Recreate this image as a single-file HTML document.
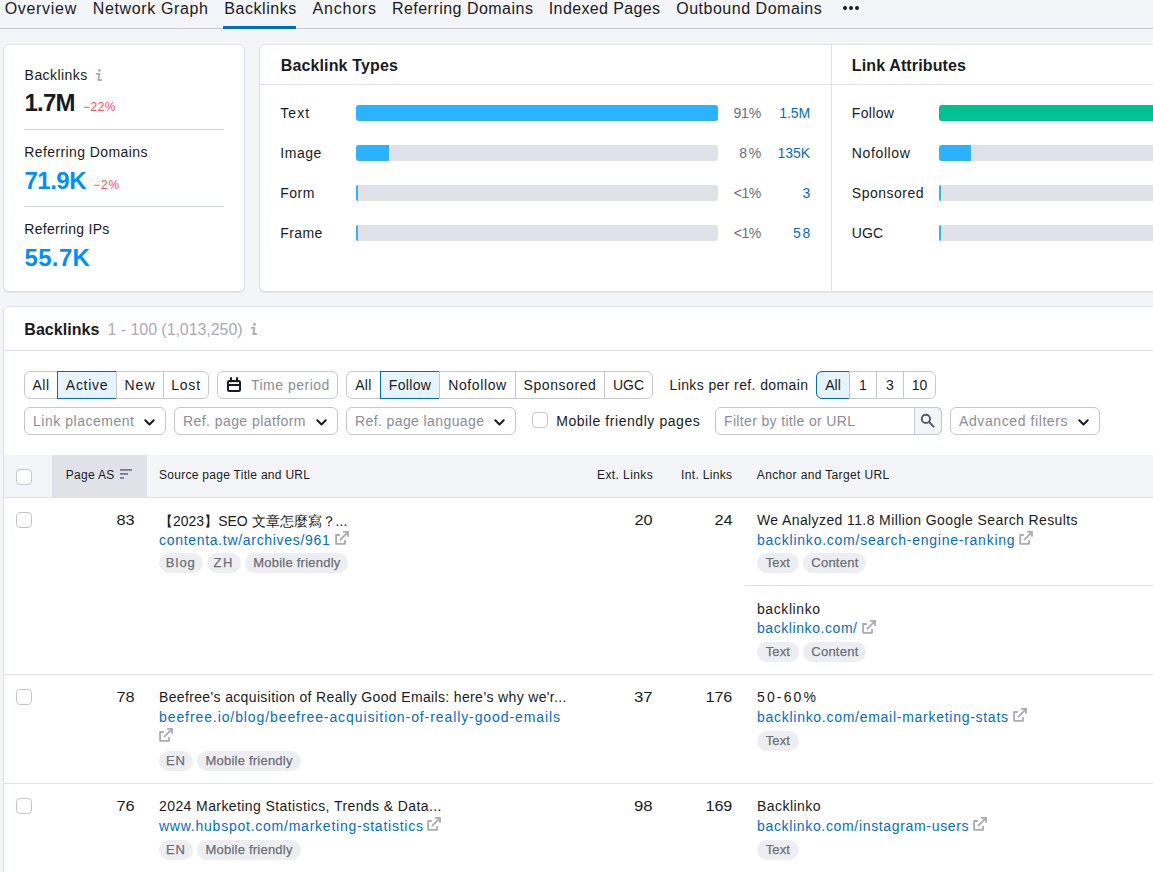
<!DOCTYPE html>
<html><head><meta charset="utf-8"><title>Backlinks</title>
<style>
html,body{margin:0;padding:0;}
body{width:1153px;height:872px;overflow:hidden;position:relative;background:#f4f5f9;font-family:"Liberation Sans",sans-serif;color:#191b23;}
.t{position:absolute;white-space:nowrap;}
</style></head><body>
<div style="position:absolute;left:0px;top:28px;width:1153px;height:1px;background:#c4c7d0"></div>
<div style="position:absolute;left:223px;top:26px;width:73px;height:3px;background:#006dca"></div>
<span class="t" style="top:1.46px;font-size:16px;line-height:16px;color:#191b23;letter-spacing:0.688px;left:4.70px;">Overview</span>
<span class="t" style="top:1.46px;font-size:16px;line-height:16px;color:#191b23;letter-spacing:0.634px;left:92.80px;">Network Graph</span>
<span class="t" style="top:1.46px;font-size:16px;line-height:16px;color:#191b23;letter-spacing:0.565px;left:224.20px;">Backlinks</span>
<span class="t" style="top:1.46px;font-size:16px;line-height:16px;color:#191b23;letter-spacing:0.799px;left:312.50px;">Anchors</span>
<span class="t" style="top:1.46px;font-size:16px;line-height:16px;color:#191b23;letter-spacing:0.476px;left:391.90px;">Referring Domains</span>
<span class="t" style="top:1.46px;font-size:16px;line-height:16px;color:#191b23;letter-spacing:0.371px;left:548.80px;">Indexed Pages</span>
<span class="t" style="top:1.46px;font-size:16px;line-height:16px;color:#191b23;letter-spacing:0.516px;left:676.20px;">Outbound Domains</span>
<div style="position:absolute;left:842.5px;top:6px;width:4px;height:4px;border-radius:50%;background:#191b23"></div>
<div style="position:absolute;left:848.8px;top:6px;width:4px;height:4px;border-radius:50%;background:#191b23"></div>
<div style="position:absolute;left:855.1px;top:6px;width:4px;height:4px;border-radius:50%;background:#191b23"></div>
<div style="position:absolute;left:3px;top:44px;width:242px;height:248px;background:#fff;border:1px solid #e0e1e9;border-radius:6px;box-sizing:border-box;box-shadow:0 1px 1px rgba(25,27,35,0.08)"></div>
<span class="t" style="top:68.15px;font-size:14px;line-height:14px;color:#191b23;letter-spacing:0.445px;left:24.60px;">Backlinks</span>
<svg style="position:absolute;left:95px;top:69px" width="8" height="12" viewBox="0 0 8 12"><circle cx="4.5" cy="1.4" r="1.35" fill="#a9abb6"/><path d="M1.1 4.9 L4.5 4.9 L3.3 11 L6.9 11" stroke="#a9abb6" stroke-width="1.8" fill="none" stroke-linejoin="round"/></svg>
<span class="t" style="top:90.68px;font-size:24px;line-height:24px;color:#191b23;font-weight:700;letter-spacing:-0.853px;left:24.60px;">1.7M</span>
<span class="t" style="top:100.84px;font-size:12px;line-height:12px;color:#ff4953;letter-spacing:0.490px;left:83.00px;">−22%</span>
<div style="position:absolute;left:24px;top:129px;width:200px;height:1px;background:#d1d3dc"></div>
<span class="t" style="top:145.45px;font-size:14px;line-height:14px;color:#191b23;letter-spacing:0.405px;left:24.20px;">Referring Domains</span>
<span class="t" style="top:168.68px;font-size:24px;line-height:24px;color:#008ff8;font-weight:700;letter-spacing:-0.512px;left:24.50px;">71.9K</span>
<span class="t" style="top:178.84px;font-size:12px;line-height:12px;color:#ff4953;letter-spacing:0.820px;left:93.20px;">−2%</span>
<div style="position:absolute;left:24px;top:206px;width:200px;height:1px;background:#d1d3dc"></div>
<span class="t" style="top:222.15px;font-size:14px;line-height:14px;color:#191b23;letter-spacing:0.275px;left:24.30px;">Referring IPs</span>
<span class="t" style="top:245.68px;font-size:24px;line-height:24px;color:#008ff8;font-weight:700;letter-spacing:0.338px;left:24.50px;">55.7K</span>
<div style="position:absolute;left:259px;top:44px;width:1100px;height:248px;background:#fff;border:1px solid #e0e1e9;border-radius:6px;box-sizing:border-box;box-shadow:0 1px 1px rgba(25,27,35,0.08)"></div>
<div style="position:absolute;left:260px;top:84px;width:1100px;height:1px;background:#e0e1e9"></div>
<div style="position:absolute;left:831px;top:45px;width:1px;height:246px;background:#e0e1e9"></div>
<span class="t" style="top:57.66px;font-size:16px;line-height:16px;color:#191b23;font-weight:700;letter-spacing:0.145px;left:280.70px;">Backlink Types</span>
<span class="t" style="top:57.66px;font-size:16px;line-height:16px;color:#191b23;font-weight:700;letter-spacing:0.136px;left:851.80px;">Link Attributes</span>
<span class="t" style="top:106.15px;font-size:14px;line-height:14px;color:#191b23;letter-spacing:1.104px;left:280.20px;">Text</span>
<div style="position:absolute;left:356px;top:105px;width:362px;height:16px;background:#e0e1e9;border-radius:3px"></div>
<div style="position:absolute;left:356px;top:105px;width:362px;height:16px;background:#2bb3ff;border-radius:3px"></div>
<span class="t" style="top:106.15px;font-size:14px;line-height:14px;color:#6c6e79;letter-spacing:-0.216px;right:392.12px;">91%</span>
<span class="t" style="top:106.15px;font-size:14px;line-height:14px;color:#006dca;letter-spacing:-0.075px;right:342.87px;">1.5M</span>
<span class="t" style="top:146.15px;font-size:14px;line-height:14px;color:#191b23;letter-spacing:0.570px;left:280.20px;">Image</span>
<div style="position:absolute;left:356px;top:145px;width:362px;height:16px;background:#e0e1e9;border-radius:3px"></div>
<div style="position:absolute;left:356px;top:145px;width:33px;height:16px;background:#2bb3ff;border-radius:3px 0 0 3px"></div>
<span class="t" style="top:146.15px;font-size:14px;line-height:14px;color:#6c6e79;letter-spacing:1.566px;right:390.33px;">8%</span>
<span class="t" style="top:146.15px;font-size:14px;line-height:14px;color:#006dca;letter-spacing:-0.001px;right:342.80px;">135K</span>
<span class="t" style="top:186.15px;font-size:14px;line-height:14px;color:#191b23;letter-spacing:0.509px;left:280.20px;">Form</span>
<div style="position:absolute;left:356px;top:185px;width:362px;height:16px;background:#e0e1e9;border-radius:3px"></div>
<div style="position:absolute;left:356px;top:185px;width:2px;height:16px;background:#2bb3ff;border-radius:2px 0 0 2px"></div>
<span class="t" style="top:186.15px;font-size:14px;line-height:14px;color:#6c6e79;letter-spacing:-0.561px;right:392.46px;">&lt;1%</span>
<span class="t" style="top:186.15px;font-size:14px;line-height:14px;color:#006dca;right:342.80px;">3</span>
<span class="t" style="top:226.15px;font-size:14px;line-height:14px;color:#191b23;letter-spacing:0.437px;left:280.20px;">Frame</span>
<div style="position:absolute;left:356px;top:225px;width:362px;height:16px;background:#e0e1e9;border-radius:3px"></div>
<div style="position:absolute;left:356px;top:225px;width:2px;height:16px;background:#2bb3ff;border-radius:2px 0 0 2px"></div>
<span class="t" style="top:226.15px;font-size:14px;line-height:14px;color:#6c6e79;letter-spacing:-0.561px;right:392.46px;">&lt;1%</span>
<span class="t" style="top:226.15px;font-size:14px;line-height:14px;color:#006dca;letter-spacing:1.622px;right:341.18px;">58</span>
<span class="t" style="top:106.15px;font-size:14px;line-height:14px;color:#191b23;letter-spacing:0.346px;left:851.80px;">Follow</span>
<div style="position:absolute;left:939px;top:105px;width:400px;height:16px;background:#e0e1e9;border-radius:3px"></div>
<div style="position:absolute;left:939px;top:105px;width:400px;height:16px;background:#00c192;border-radius:3px"></div>
<span class="t" style="top:146.15px;font-size:14px;line-height:14px;color:#191b23;letter-spacing:0.628px;left:851.80px;">Nofollow</span>
<div style="position:absolute;left:939px;top:145px;width:400px;height:16px;background:#e0e1e9;border-radius:3px"></div>
<div style="position:absolute;left:939px;top:145px;width:32px;height:16px;background:#2bb3ff;border-radius:3px 0 0 3px"></div>
<span class="t" style="top:186.15px;font-size:14px;line-height:14px;color:#191b23;letter-spacing:0.498px;left:851.80px;">Sponsored</span>
<div style="position:absolute;left:939px;top:185px;width:400px;height:16px;background:#e0e1e9;border-radius:3px"></div>
<div style="position:absolute;left:939px;top:185px;width:2px;height:16px;background:#2bb3ff;border-radius:2px 0 0 2px"></div>
<span class="t" style="top:226.15px;font-size:14px;line-height:14px;color:#191b23;letter-spacing:0.088px;left:851.80px;">UGC</span>
<div style="position:absolute;left:939px;top:225px;width:400px;height:16px;background:#e0e1e9;border-radius:3px"></div>
<div style="position:absolute;left:939px;top:225px;width:2px;height:16px;background:#2bb3ff;border-radius:2px 0 0 2px"></div>
<div style="position:absolute;left:3px;top:306px;width:1200px;height:700px;background:#fff;border:1px solid #e0e1e9;border-radius:6px;box-sizing:border-box;box-shadow:0 1px 1px rgba(25,27,35,0.08)"></div>
<span class="t" style="top:322.06px;font-size:16px;line-height:16px;color:#191b23;font-weight:700;letter-spacing:0.035px;left:24.30px;">Backlinks</span>
<span class="t" style="top:322.06px;font-size:16px;line-height:16px;color:#a9abb6;letter-spacing:-0.061px;left:107.60px;">1 - 100 (1,013,250)</span>
<svg style="position:absolute;left:250px;top:323px" width="8" height="12" viewBox="0 0 8 12"><circle cx="4.5" cy="1.4" r="1.35" fill="#a9abb6"/><path d="M1.1 4.9 L4.5 4.9 L3.3 11 L6.9 11" stroke="#a9abb6" stroke-width="1.8" fill="none" stroke-linejoin="round"/></svg>
<div style="position:absolute;left:4px;top:350px;width:1200px;height:1px;background:#e0e1e9"></div>
<div style="position:absolute;left:24px;top:371px;width:185px;height:28px;border:1px solid #c4c7d0;border-radius:6px;box-sizing:border-box;background:#fff"></div>
<span class="t" style="top:378.15px;font-size:14px;line-height:14px;color:#191b23;letter-spacing:0.469px;left:41.00px;transform:translateX(-50%);">All</span>
<div style="position:absolute;left:57px;top:371px;width:1px;height:28px;background:#c4c7d0"></div>
<div style="position:absolute;left:57px;top:371px;width:60px;height:28px;background:#e6f4ff;border:1px solid #006dca;box-sizing:border-box;border-radius:0"></div>
<span class="t" style="top:378.15px;font-size:14px;line-height:14px;color:#191b23;letter-spacing:0.695px;left:87.00px;transform:translateX(-50%);">Active</span>
<div style="position:absolute;left:116px;top:371px;width:1px;height:28px;background:#c4c7d0"></div>
<span class="t" style="top:378.15px;font-size:14px;line-height:14px;color:#191b23;letter-spacing:1.042px;left:140.00px;transform:translateX(-50%);">New</span>
<div style="position:absolute;left:163px;top:371px;width:1px;height:28px;background:#c4c7d0"></div>
<span class="t" style="top:378.15px;font-size:14px;line-height:14px;color:#191b23;letter-spacing:0.810px;left:186.00px;transform:translateX(-50%);">Lost</span>
<div style="position:absolute;left:217px;top:371px;width:121px;height:28px;border:1px solid #c4c7d0;border-radius:6px;box-sizing:border-box;background:#fff"></div>
<svg style="position:absolute;left:226px;top:376px" width="16" height="17" viewBox="0 0 16 17"><rect x="2" y="5" width="12" height="10" rx="1.2" fill="none" stroke="#191b23" stroke-width="2"/><rect x="2" y="8" width="12" height="2" fill="#191b23"/><rect x="4" y="1" width="2" height="5.6" rx="1" fill="#191b23"/><rect x="10" y="1" width="2" height="5.6" rx="1" fill="#191b23"/></svg>
<span class="t" style="top:378.15px;font-size:14px;line-height:14px;color:#8a8d99;letter-spacing:0.509px;left:250.90px;">Time period</span>
<div style="position:absolute;left:346px;top:371px;width:307px;height:28px;border:1px solid #c4c7d0;border-radius:6px;box-sizing:border-box;background:#fff"></div>
<span class="t" style="top:378.15px;font-size:14px;line-height:14px;color:#191b23;letter-spacing:0.369px;left:363.50px;transform:translateX(-50%);">All</span>
<div style="position:absolute;left:380px;top:371px;width:1px;height:28px;background:#c4c7d0"></div>
<div style="position:absolute;left:380px;top:371px;width:60px;height:28px;background:#e6f4ff;border:1px solid #006dca;box-sizing:border-box;border-radius:0"></div>
<span class="t" style="top:378.15px;font-size:14px;line-height:14px;color:#191b23;letter-spacing:0.346px;left:410.00px;transform:translateX(-50%);">Follow</span>
<div style="position:absolute;left:439px;top:371px;width:1px;height:28px;background:#c4c7d0"></div>
<span class="t" style="top:378.15px;font-size:14px;line-height:14px;color:#191b23;letter-spacing:0.614px;left:477.50px;transform:translateX(-50%);">Nofollow</span>
<div style="position:absolute;left:515px;top:371px;width:1px;height:28px;background:#c4c7d0"></div>
<span class="t" style="top:378.15px;font-size:14px;line-height:14px;color:#191b23;letter-spacing:0.560px;left:560.00px;transform:translateX(-50%);">Sponsored</span>
<div style="position:absolute;left:604px;top:371px;width:1px;height:28px;background:#c4c7d0"></div>
<span class="t" style="top:378.15px;font-size:14px;line-height:14px;color:#191b23;letter-spacing:-0.062px;left:628.50px;transform:translateX(-50%);">UGC</span>
<span class="t" style="top:378.15px;font-size:14px;line-height:14px;color:#191b23;letter-spacing:0.388px;left:669.50px;">Links per ref. domain</span>
<div style="position:absolute;left:816px;top:371px;width:120px;height:28px;border:1px solid #c4c7d0;border-radius:6px;box-sizing:border-box;background:#fff"></div>
<div style="position:absolute;left:816px;top:371px;width:34px;height:28px;background:#e6f4ff;border:1px solid #006dca;box-sizing:border-box;border-radius:6px 0 0 6px"></div>
<span class="t" style="top:378.15px;font-size:14px;line-height:14px;color:#191b23;left:833.00px;transform:translateX(-50%);">All</span>
<div style="position:absolute;left:849px;top:371px;width:1px;height:28px;background:#c4c7d0"></div>
<span class="t" style="top:378.15px;font-size:14px;line-height:14px;color:#191b23;left:863.00px;transform:translateX(-50%);">1</span>
<div style="position:absolute;left:876px;top:371px;width:1px;height:28px;background:#c4c7d0"></div>
<span class="t" style="top:378.15px;font-size:14px;line-height:14px;color:#191b23;left:890.00px;transform:translateX(-50%);">3</span>
<div style="position:absolute;left:903px;top:371px;width:1px;height:28px;background:#c4c7d0"></div>
<span class="t" style="top:378.15px;font-size:14px;line-height:14px;color:#191b23;left:919.50px;transform:translateX(-50%);">10</span>
<div style="position:absolute;left:24px;top:407px;width:142px;height:28px;border:1px solid #c4c7d0;border-radius:6px;box-sizing:border-box;background:#fff"></div>
<span class="t" style="top:414.15px;font-size:14px;line-height:14px;color:#8a8d99;letter-spacing:0.525px;left:33.00px;">Link placement</span>
<svg style="position:absolute;left:144px;top:417.5px" width="12" height="8" viewBox="0 0 12 8"><path d="M1.3 2.3 L5.5 6.5 L9.7 2.3" stroke="#191b23" stroke-width="2" fill="none" stroke-linecap="round" stroke-linejoin="round"/></svg>
<div style="position:absolute;left:174px;top:407px;width:164px;height:28px;border:1px solid #c4c7d0;border-radius:6px;box-sizing:border-box;background:#fff"></div>
<span class="t" style="top:414.15px;font-size:14px;line-height:14px;color:#8a8d99;letter-spacing:0.431px;left:183.00px;">Ref. page platform</span>
<svg style="position:absolute;left:316px;top:417.5px" width="12" height="8" viewBox="0 0 12 8"><path d="M1.3 2.3 L5.5 6.5 L9.7 2.3" stroke="#191b23" stroke-width="2" fill="none" stroke-linecap="round" stroke-linejoin="round"/></svg>
<div style="position:absolute;left:346px;top:407px;width:170px;height:28px;border:1px solid #c4c7d0;border-radius:6px;box-sizing:border-box;background:#fff"></div>
<span class="t" style="top:414.15px;font-size:14px;line-height:14px;color:#8a8d99;letter-spacing:0.399px;left:355.00px;">Ref. page language</span>
<svg style="position:absolute;left:494px;top:417.5px" width="12" height="8" viewBox="0 0 12 8"><path d="M1.3 2.3 L5.5 6.5 L9.7 2.3" stroke="#191b23" stroke-width="2" fill="none" stroke-linecap="round" stroke-linejoin="round"/></svg>
<div style="position:absolute;left:532px;top:412px;width:16px;height:16px;border:1px solid #c4c7d0;border-radius:4px;box-sizing:border-box;background:#fff"></div>
<span class="t" style="top:414.15px;font-size:14px;line-height:14px;color:#191b23;letter-spacing:0.565px;left:556.20px;">Mobile friendly pages</span>
<div style="position:absolute;left:715px;top:407px;width:227px;height:28px;border:1px solid #c4c7d0;border-radius:6px;box-sizing:border-box;background:#fff"></div>
<div style="position:absolute;left:914px;top:407px;width:28px;height:28px;border:1px solid #c4c7d0;border-radius:0 6px 6px 0;box-sizing:border-box;background:#f4f5f9"></div>
<svg style="position:absolute;left:918px;top:411px" width="18" height="18" viewBox="0 0 18 18"><circle cx="7.9" cy="7.9" r="4.1" fill="none" stroke="#555862" stroke-width="1.9"/><path d="M11 11 L15.6 15.6" stroke="#555862" stroke-width="2" stroke-linecap="round"/></svg>
<span class="t" style="top:414.15px;font-size:14px;line-height:14px;color:#8a8d99;letter-spacing:0.347px;left:724.00px;">Filter by title or URL</span>
<div style="position:absolute;left:950px;top:407px;width:150px;height:28px;border:1px solid #c4c7d0;border-radius:6px;box-sizing:border-box;background:#fff"></div>
<span class="t" style="top:414.15px;font-size:14px;line-height:14px;color:#8a8d99;letter-spacing:0.593px;left:959.00px;">Advanced filters</span>
<svg style="position:absolute;left:1078px;top:417.5px" width="12" height="8" viewBox="0 0 12 8"><path d="M1.3 2.3 L5.5 6.5 L9.7 2.3" stroke="#191b23" stroke-width="2" fill="none" stroke-linecap="round" stroke-linejoin="round"/></svg>
<div style="position:absolute;left:4px;top:455px;width:1200px;height:42px;background:#f4f5f9"></div>
<div style="position:absolute;left:4px;top:497px;width:1200px;height:1px;background:#e0e1e9"></div>
<div style="position:absolute;left:52px;top:455px;width:95px;height:42px;background:#e0e1e9"></div>
<div style="position:absolute;left:16px;top:469px;width:16px;height:16px;border:1px solid #c4c7d0;border-radius:4px;box-sizing:border-box;background:#fff"></div>
<span class="t" style="top:468.54px;font-size:12px;line-height:12px;color:#191b23;letter-spacing:0.280px;left:65.80px;">Page AS</span>
<svg style="position:absolute;left:120px;top:468px" width="12" height="12" viewBox="0 0 12 12"><rect x="0" y="1" width="12" height="1.8" fill="#787c94"/><rect x="0" y="5" width="8" height="1.8" fill="#787c94"/><rect x="0" y="9.1" width="4" height="1.8" fill="#787c94"/></svg>
<span class="t" style="top:468.54px;font-size:12px;line-height:12px;color:#191b23;letter-spacing:0.288px;left:159.00px;">Source page Title and URL</span>
<span class="t" style="top:468.54px;font-size:12px;line-height:12px;color:#191b23;letter-spacing:0.408px;right:499.89px;">Ext. Links</span>
<span class="t" style="top:468.54px;font-size:12px;line-height:12px;color:#191b23;letter-spacing:0.330px;right:420.57px;">Int. Links</span>
<span class="t" style="top:468.54px;font-size:12px;line-height:12px;color:#191b23;letter-spacing:0.356px;left:756.80px;">Anchor and Target URL</span>
<div style="position:absolute;left:16px;top:512px;width:16px;height:16px;border:1px solid #c4c7d0;border-radius:4px;box-sizing:border-box;background:#fff"></div>
<span class="t" style="top:512.85px;font-size:14px;line-height:14px;color:#191b23;right:1018.40px;transform:scaleX(1.1661);transform-origin:100% 50%;">83</span>
<span class="t" style="top:513.55px;font-size:14px;line-height:14px;color:#191b23;left:159.00px;">【2023】SEO 文章怎麼寫？...</span>
<span class="t" style="top:532.55px;font-size:14px;line-height:14px;color:#006dca;letter-spacing:0.692px;left:159.00px;">contenta.tw/archives/961</span>
<svg style="position:absolute;left:335px;top:531px" width="15" height="15" viewBox="0 0 15 15"><path d="M4.8 4 H1.1 V12.8 H10 V9" stroke="#a9abb6" stroke-width="1.8" fill="none" stroke-linejoin="round"/><path d="M8.1 0.9 H13 V5.7" stroke="#a9abb6" stroke-width="1.8" fill="none"/><path d="M5.4 8.6 L12.4 1.6" stroke="#a9abb6" stroke-width="1.8" stroke-linecap="round"/></svg>
<div style="position:absolute;left:159px;top:553px;width:43.69999999999999px;height:20px;background:#edeef2;border-radius:10px"></div>
<span class="t" style="top:556.20px;font-size:13px;line-height:13px;color:#6c6e79;-webkit-text-stroke:0.25px #6c6e79;letter-spacing:0.990px;left:180.85px;transform:translateX(-50%);">Blog</span>
<div style="position:absolute;left:207px;top:553px;width:33.599999999999994px;height:20px;background:#edeef2;border-radius:10px"></div>
<span class="t" style="top:556.20px;font-size:13px;line-height:13px;color:#6c6e79;-webkit-text-stroke:0.25px #6c6e79;letter-spacing:1.656px;left:223.80px;transform:translateX(-50%);">ZH</span>
<div style="position:absolute;left:245.4px;top:553px;width:102.99999999999997px;height:20px;background:#edeef2;border-radius:10px"></div>
<span class="t" style="top:556.20px;font-size:13px;line-height:13px;color:#6c6e79;-webkit-text-stroke:0.25px #6c6e79;letter-spacing:0.227px;left:296.90px;transform:translateX(-50%);">Mobile friendly</span>
<span class="t" style="top:512.85px;font-size:14px;line-height:14px;color:#191b23;right:500.30px;transform:scaleX(1.1661);transform-origin:100% 50%;">20</span>
<span class="t" style="top:512.85px;font-size:14px;line-height:14px;color:#191b23;right:420.90px;transform:scaleX(1.1661);transform-origin:100% 50%;">24</span>
<span class="t" style="top:513.15px;font-size:14px;line-height:14px;color:#191b23;letter-spacing:0.391px;left:757.00px;">We Analyzed 11.8 Million Google Search Results</span>
<span class="t" style="top:532.55px;font-size:14px;line-height:14px;color:#006dca;letter-spacing:0.756px;left:757.00px;">backlinko.com/search-engine-ranking</span>
<svg style="position:absolute;left:1019px;top:531px" width="15" height="15" viewBox="0 0 15 15"><path d="M4.8 4 H1.1 V12.8 H10 V9" stroke="#a9abb6" stroke-width="1.8" fill="none" stroke-linejoin="round"/><path d="M8.1 0.9 H13 V5.7" stroke="#a9abb6" stroke-width="1.8" fill="none"/><path d="M5.4 8.6 L12.4 1.6" stroke="#a9abb6" stroke-width="1.8" stroke-linecap="round"/></svg>
<div style="position:absolute;left:757px;top:553px;width:41.700000000000045px;height:20px;background:#edeef2;border-radius:10px"></div>
<span class="t" style="top:556.20px;font-size:13px;line-height:13px;color:#6c6e79;-webkit-text-stroke:0.25px #6c6e79;letter-spacing:0.052px;left:777.85px;transform:translateX(-50%);">Text</span>
<div style="position:absolute;left:803.4px;top:553px;width:63.0px;height:20px;background:#edeef2;border-radius:10px"></div>
<span class="t" style="top:556.20px;font-size:13px;line-height:13px;color:#6c6e79;-webkit-text-stroke:0.25px #6c6e79;letter-spacing:0.242px;left:834.90px;transform:translateX(-50%);">Content</span>
<div style="position:absolute;left:745px;top:585px;width:500px;height:1px;background:#e0e1e9"></div>
<span class="t" style="top:601.55px;font-size:14px;line-height:14px;color:#191b23;letter-spacing:0.578px;left:757.00px;">backlinko</span>
<span class="t" style="top:621.15px;font-size:14px;line-height:14px;color:#006dca;letter-spacing:0.570px;left:757.00px;">backlinko.com/</span>
<svg style="position:absolute;left:862px;top:620px" width="15" height="15" viewBox="0 0 15 15"><path d="M4.8 4 H1.1 V12.8 H10 V9" stroke="#a9abb6" stroke-width="1.8" fill="none" stroke-linejoin="round"/><path d="M8.1 0.9 H13 V5.7" stroke="#a9abb6" stroke-width="1.8" fill="none"/><path d="M5.4 8.6 L12.4 1.6" stroke="#a9abb6" stroke-width="1.8" stroke-linecap="round"/></svg>
<div style="position:absolute;left:757px;top:642px;width:41.700000000000045px;height:20px;background:#edeef2;border-radius:10px"></div>
<span class="t" style="top:645.20px;font-size:13px;line-height:13px;color:#6c6e79;-webkit-text-stroke:0.25px #6c6e79;letter-spacing:0.052px;left:777.85px;transform:translateX(-50%);">Text</span>
<div style="position:absolute;left:803.4px;top:642px;width:63.0px;height:20px;background:#edeef2;border-radius:10px"></div>
<span class="t" style="top:645.20px;font-size:13px;line-height:13px;color:#6c6e79;-webkit-text-stroke:0.25px #6c6e79;letter-spacing:0.242px;left:834.90px;transform:translateX(-50%);">Content</span>
<div style="position:absolute;left:4px;top:674px;width:1200px;height:1px;background:#e0e1e9"></div>
<div style="position:absolute;left:16px;top:689px;width:16px;height:16px;border:1px solid #c4c7d0;border-radius:4px;box-sizing:border-box;background:#fff"></div>
<span class="t" style="top:690.15px;font-size:14px;line-height:14px;color:#191b23;right:1018.40px;transform:scaleX(1.1661);transform-origin:100% 50%;">78</span>
<span class="t" style="top:690.15px;font-size:14px;line-height:14px;color:#191b23;letter-spacing:0.353px;left:159.00px;">Beefree's acquisition of Really Good Emails: here’s why we'r...</span>
<span class="t" style="top:710.15px;font-size:14px;line-height:14px;color:#006dca;letter-spacing:0.907px;left:159.00px;">beefree.io/blog/beefree-acquisition-of-really-good-emails</span>
<svg style="position:absolute;left:159px;top:728px" width="15" height="15" viewBox="0 0 15 15"><path d="M4.8 4 H1.1 V12.8 H10 V9" stroke="#a9abb6" stroke-width="1.8" fill="none" stroke-linejoin="round"/><path d="M8.1 0.9 H13 V5.7" stroke="#a9abb6" stroke-width="1.8" fill="none"/><path d="M5.4 8.6 L12.4 1.6" stroke="#a9abb6" stroke-width="1.8" stroke-linecap="round"/></svg>
<div style="position:absolute;left:159px;top:751px;width:33.69999999999999px;height:20px;background:#edeef2;border-radius:10px"></div>
<span class="t" style="top:754.20px;font-size:13px;line-height:13px;color:#6c6e79;-webkit-text-stroke:0.25px #6c6e79;letter-spacing:0.938px;left:175.85px;transform:translateX(-50%);">EN</span>
<div style="position:absolute;left:197.3px;top:751px;width:103.5px;height:20px;background:#edeef2;border-radius:10px"></div>
<span class="t" style="top:754.20px;font-size:13px;line-height:13px;color:#6c6e79;-webkit-text-stroke:0.25px #6c6e79;letter-spacing:0.227px;left:249.05px;transform:translateX(-50%);">Mobile friendly</span>
<span class="t" style="top:690.15px;font-size:14px;line-height:14px;color:#191b23;right:500.80px;transform:scaleX(1.2004);transform-origin:100% 50%;">37</span>
<span class="t" style="top:690.15px;font-size:14px;line-height:14px;color:#191b23;right:420.90px;transform:scaleX(1.1539);transform-origin:100% 50%;">176</span>
<span class="t" style="top:690.15px;font-size:14px;line-height:14px;color:#191b23;letter-spacing:2.147px;left:757.00px;">50-60%</span>
<span class="t" style="top:710.15px;font-size:14px;line-height:14px;color:#006dca;letter-spacing:0.723px;left:757.00px;">backlinko.com/email-marketing-stats</span>
<svg style="position:absolute;left:1013px;top:708px" width="15" height="15" viewBox="0 0 15 15"><path d="M4.8 4 H1.1 V12.8 H10 V9" stroke="#a9abb6" stroke-width="1.8" fill="none" stroke-linejoin="round"/><path d="M8.1 0.9 H13 V5.7" stroke="#a9abb6" stroke-width="1.8" fill="none"/><path d="M5.4 8.6 L12.4 1.6" stroke="#a9abb6" stroke-width="1.8" stroke-linecap="round"/></svg>
<div style="position:absolute;left:757px;top:731px;width:41.700000000000045px;height:20px;background:#edeef2;border-radius:10px"></div>
<span class="t" style="top:734.20px;font-size:13px;line-height:13px;color:#6c6e79;-webkit-text-stroke:0.25px #6c6e79;letter-spacing:0.052px;left:777.85px;transform:translateX(-50%);">Text</span>
<div style="position:absolute;left:4px;top:783px;width:1200px;height:1px;background:#e0e1e9"></div>
<div style="position:absolute;left:16px;top:798px;width:16px;height:16px;border:1px solid #c4c7d0;border-radius:4px;box-sizing:border-box;background:#fff"></div>
<span class="t" style="top:799.15px;font-size:14px;line-height:14px;color:#191b23;right:1018.40px;transform:scaleX(1.1661);transform-origin:100% 50%;">76</span>
<span class="t" style="top:799.15px;font-size:14px;line-height:14px;color:#191b23;letter-spacing:0.408px;left:159.00px;">2024 Marketing Statistics, Trends &amp; Data...</span>
<span class="t" style="top:819.15px;font-size:14px;line-height:14px;color:#006dca;letter-spacing:0.762px;left:159.00px;">www.hubspot.com/marketing-statistics</span>
<svg style="position:absolute;left:427px;top:817px" width="15" height="15" viewBox="0 0 15 15"><path d="M4.8 4 H1.1 V12.8 H10 V9" stroke="#a9abb6" stroke-width="1.8" fill="none" stroke-linejoin="round"/><path d="M8.1 0.9 H13 V5.7" stroke="#a9abb6" stroke-width="1.8" fill="none"/><path d="M5.4 8.6 L12.4 1.6" stroke="#a9abb6" stroke-width="1.8" stroke-linecap="round"/></svg>
<div style="position:absolute;left:159px;top:840px;width:33.69999999999999px;height:20px;background:#edeef2;border-radius:10px"></div>
<span class="t" style="top:843.20px;font-size:13px;line-height:13px;color:#6c6e79;-webkit-text-stroke:0.25px #6c6e79;letter-spacing:0.938px;left:175.85px;transform:translateX(-50%);">EN</span>
<div style="position:absolute;left:197.3px;top:840px;width:103.5px;height:20px;background:#edeef2;border-radius:10px"></div>
<span class="t" style="top:843.20px;font-size:13px;line-height:13px;color:#6c6e79;-webkit-text-stroke:0.25px #6c6e79;letter-spacing:0.227px;left:249.05px;transform:translateX(-50%);">Mobile friendly</span>
<span class="t" style="top:799.15px;font-size:14px;line-height:14px;color:#191b23;right:500.80px;transform:scaleX(1.2004);transform-origin:100% 50%;">98</span>
<span class="t" style="top:799.15px;font-size:14px;line-height:14px;color:#191b23;right:420.90px;transform:scaleX(1.1539);transform-origin:100% 50%;">169</span>
<span class="t" style="top:799.15px;font-size:14px;line-height:14px;color:#191b23;letter-spacing:0.447px;left:757.00px;">Backlinko</span>
<span class="t" style="top:819.15px;font-size:14px;line-height:14px;color:#006dca;letter-spacing:0.665px;left:757.00px;">backlinko.com/instagram-users</span>
<svg style="position:absolute;left:973px;top:817px" width="15" height="15" viewBox="0 0 15 15"><path d="M4.8 4 H1.1 V12.8 H10 V9" stroke="#a9abb6" stroke-width="1.8" fill="none" stroke-linejoin="round"/><path d="M8.1 0.9 H13 V5.7" stroke="#a9abb6" stroke-width="1.8" fill="none"/><path d="M5.4 8.6 L12.4 1.6" stroke="#a9abb6" stroke-width="1.8" stroke-linecap="round"/></svg>
<div style="position:absolute;left:757px;top:840px;width:41.700000000000045px;height:20px;background:#edeef2;border-radius:10px"></div>
<span class="t" style="top:843.20px;font-size:13px;line-height:13px;color:#6c6e79;-webkit-text-stroke:0.25px #6c6e79;letter-spacing:0.052px;left:777.85px;transform:translateX(-50%);">Text</span>
</body></html>
